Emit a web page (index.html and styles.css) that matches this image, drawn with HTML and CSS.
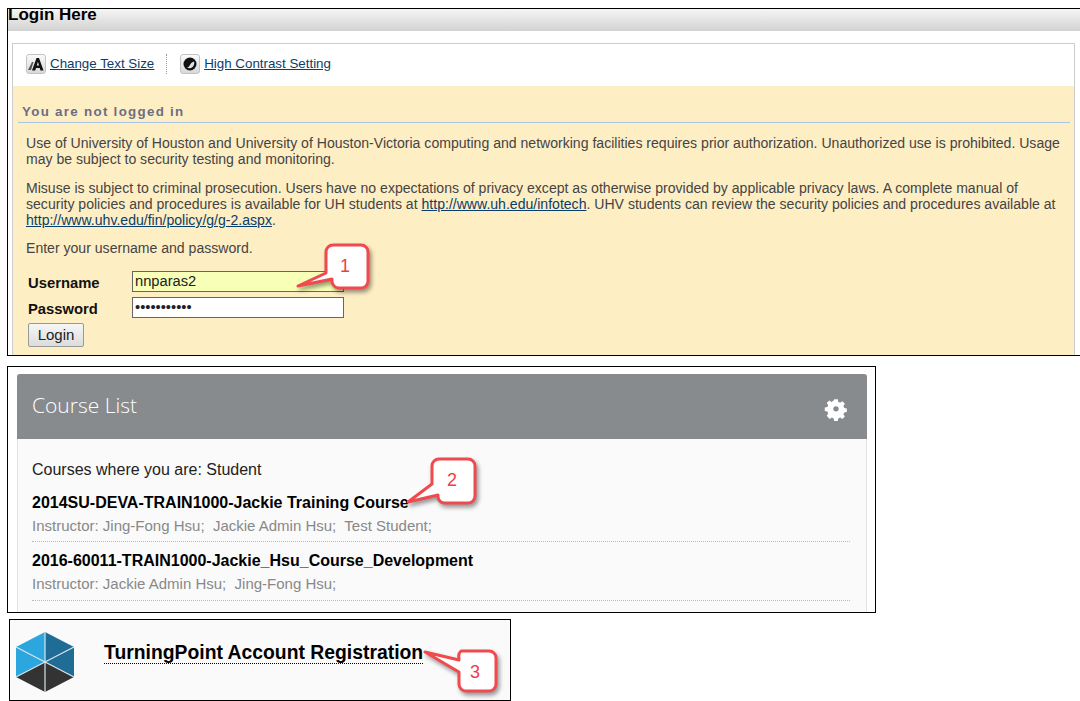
FILE: index.html
```html
<!DOCTYPE html>
<html lang="en">
<head>
<meta charset="utf-8">
<title>Login Here</title>
<link rel="stylesheet" href="styles.css">
</head>
<body>
<section class="shot login-shot">
  <h1 class="login-title">Login Here</h1>
  <div class="login-box">
    <div class="toolbar">
      <a class="tool" href="#">
        <span class="tool-icon">
          <svg width="18" height="18" viewBox="0 0 18 18"><path d="M1 15 5 7h1.500L4 15zM6 15l2-5h1.500L8 15z" fill="#555"/><path d="M5 15.500 9.500 3h2.500l4.500 12.500h-3l-.8-2.600H9l-.8 2.600zM9.800 10.500h2.200L10.900 6.800z" fill="#111"/></svg>
        </span>
        <span class="tool-label">Change Text Size</span>
      </a>
      <a class="tool tool-second" href="#">
        <span class="tool-icon">
          <svg width="18" height="18" viewBox="0 0 18 18"><circle cx="9" cy="9" r="6.500" fill="#111"/><path d="M13 6.500c.8 2.500-.5 5.500-3 6.500-1.500.6-3 .3-4-.5 1.800-.2 2.500-1.500 3.200-3C10 8 11.500 6.800 13 6.500z" fill="#e2e2e2"/></svg>
        </span>
        <span class="tool-label">High Contrast Setting</span>
      </a>
    </div>
    <div class="notice">
      <h2 class="notice-title">You are not logged in</h2>
      <p class="notice-text">Use of University of Houston and University of Houston-Victoria computing and networking facilities requires prior authorization. Unauthorized use is prohibited. Usage may be subject to security testing and monitoring.</p>
      <p class="notice-text">Misuse is subject to criminal prosecution. Users have no expectations of privacy except as otherwise provided by applicable privacy laws. A complete manual of security policies and procedures is available for UH students at <a href="#">http://www.uh.edu/infotech</a>. UHV students can review the security policies and procedures available at <a href="#">http://www.uhv.edu/fin/policy/g/g-2.aspx</a>.</p>
      <p class="notice-text notice-prompt">Enter your username and password.</p>
      <form class="login-form">
        <label class="field-label" for="u">Username</label>
        <input class="field field-filled" id="u" type="text" value="nnparas2">
        <label class="field-label" for="p">Password</label>
        <input class="field" id="p" type="password" value="12345678901">
        <button class="login-btn" type="button">Login</button>
      </form>
    </div>
  </div>
  <svg class="callout callout-1" width="80" height="52" viewBox="0 0 80 52">
    <path class="callout-shape" d="M38 2h28a7 7 0 0 1 7 7v29a7 7 0 0 1-7 7H44a7 7 0 0 1-7-7v-2L3 43l28-13V9a7 7 0 0 1 7-7z"/>
    <text class="callout-num" x="50" y="29">1</text>
  </svg>
</section>

<section class="shot course-shot">
  <div class="card">
    <header class="card-head">
      <h2 class="card-title">Course List</h2>
      <svg class="gear" width="24" height="24" viewBox="0 0 24 24"><path fill="#fff" fill-rule="evenodd" d="M10 1.500h4l.6 3a8 8 0 0 1 2 .9l2.600-1.700 2.800 2.800-1.700 2.600a8 8 0 0 1 .9 2l3 .6v4l-3 .6a8 8 0 0 1-.9 2l1.700 2.600-2.800 2.800-2.600-1.700a8 8 0 0 1-2 .9l-.6 3h-4l-.6-3a8 8 0 0 1-2-.9l-2.600 1.700L1.600 19.900l1.700-2.600a8 8 0 0 1-.9-2l-3-.6v-4l3-.6a8 8 0 0 1 .9-2L1.600 5.500l2.800-2.800L7 4.400a8 8 0 0 1 2-.9zM12 9.200a3 3 0 1 0 0 6 3 3 0 0 0 0-6z" transform="translate(1.300 1) scale(.89)"/></svg>
    </header>
    <div class="card-body">
      <p class="role">Courses where you are: Student</p>
      <div class="course">
        <h3 class="course-name">2014SU-DEVA-TRAIN1000-Jackie Training Course</h3>
        <p class="course-meta">Instructor: Jing-Fong Hsu;&nbsp; Jackie Admin Hsu;&nbsp; Test Student;</p>
      </div>
      <div class="course course-next">
        <h3 class="course-name">2016-60011-TRAIN1000-Jackie_Hsu_Course_Development</h3>
        <p class="course-meta">Instructor: Jackie Admin Hsu;&nbsp; Jing-Fong Hsu;</p>
      </div>
    </div>
  </div>
  <svg class="callout callout-2" width="76" height="54" viewBox="0 0 76 54">
    <path class="callout-shape" d="M33 2h29a7 7 0 0 1 7 7v30a7 7 0 0 1-7 7H38a7 7 0 0 1-6-6v-2L2 45l24-18V9a7 7 0 0 1 7-7z"/>
    <text class="callout-num" x="46" y="29">2</text>
  </svg>
</section>

<section class="shot turning-shot">
  <svg class="logo" width="60" height="60" viewBox="0 0 60 60">
    <path d="M30 0 59 15 30 30z" fill="#1f6d96"/>
    <path d="M59 15V45L30 30z" fill="#1f6d96"/>
    <path d="M30 0 1 15 30 30z" fill="#2ba6de"/>
    <path d="M1 15V45L30 30z" fill="#2ba6de"/>
    <path d="M1 45 30 30V60z" fill="#333"/>
    <path d="M59 45 30 30V60z" fill="#333"/>
    <path d="M30 0V60M1 15 59 45M59 15 1 45" stroke="#d8e4ea" stroke-width="1.200" fill="none"/>
  </svg>
  <h2 class="turning-title">TurningPoint Account Registration</h2>
  <svg class="callout callout-3" width="80" height="48" viewBox="0 0 80 48">
    <path class="callout-shape" d="M39 3h28a7 7 0 0 1 7 7v26a7 7 0 0 1-7 7H44a7 7 0 0 1-7-7V24L3 4l34 8v-2a7 7 0 0 1 2-7z"/>
    <text class="callout-num" x="53" y="30">3</text>
  </svg>
</section>
</body>
</html>
```
FILE: styles.css
```css
* { box-sizing: border-box; }
html, body { margin: 0; padding: 0; overflow: hidden; }
body {
  width: 1080px;
  height: 701px;
  padding-top: 8px;
  background: #fff;
  font-family: "Liberation Sans", Arial, sans-serif;
  color: #000;
}
h1, h2, h3, p { margin: 0; }

.shot { position: relative; border: 1px solid #000; }

/* Login */
.login-shot {
  width: 1090px;
  height: 348px;
  margin-left: 7px;
  background: #fff;
  overflow: hidden;
}
.login-title {
  height: 22px;
  font-size: 17px;
  line-height: 11px;
  font-weight: 700;
  background: linear-gradient(#f5f5f5, #d2d2d2);
}
.login-box {
  width: 1063px;
  margin: 12px 0 0 4px;
  border: 1px solid #ccc;
  border-bottom: 0;
  height: 320px;
}
.toolbar {
  display: flex;
  align-items: center;
  height: 42px;
  padding: 0 0 2px 13px;
  background: #fff;
}
.tool {
  display: flex;
  align-items: center;
  gap: 4px;
  font-size: 13.330px;
  color: #0b3d6b;
}
.tool-label { position: relative; top: -1px; text-decoration: underline; }
.tool-second {
  margin-left: 12px;
  padding-left: 13px;
  border-left: 1px dotted #999;
  height: 20px;
}
.tool-icon {
  display: flex;
  align-items: center;
  justify-content: center;
  width: 20px;
  height: 20px;
  border: 1px solid #c4c4c4;
  border-radius: 3px;
  background: linear-gradient(#fafafa, #d8d8d8);
}
.notice {
  height: 270px;
  padding: 18px 4px 0 5px;
  background: #feeec4;
}
.notice-title {
  padding: 0 0 2px 4px;
  border-bottom: 1px solid #a9c3e4;
  font-size: 13.330px;
  line-height: 16px;
  font-weight: 700;
  letter-spacing: 1.300px;
  color: #6a6e85;
}
.notice-text {
  margin: 13px 8px 0 8px;
  font-size: 14.070px;
  line-height: 16px;
  color: #444;
}
.notice-title + .notice-text { margin-top: 12px; }
.notice-prompt { margin-top: 12px; }
.login-form {
  display: grid;
  grid-template-columns: 104px 212px;
  grid-auto-rows: 26px;
  align-items: center;
  margin: 12px 0 0 10px;
}
.notice-text a { color: #0b3d6b; }
.field-label {
  padding-top: 3px;
  font-size: 14.800px;
  font-weight: 700;
  color: #111;
}
.field {
  width: 212px;
  height: 21px;
  padding: 0 2px;
  border: 1px solid #666;
  border-radius: 0;
  background: #fff;
  font: 14.700px "Liberation Sans", Arial, sans-serif;
  color: #222;
  outline: 0;
}
.field-filled { background: #f8ffb6; }
.login-btn {
  grid-column: 1;
  justify-self: start;
  width: 56px;
  height: 24px;
  margin-top: 3px;
  padding: 0;
  border: 1px solid #999;
  border-radius: 2px;
  background: linear-gradient(#f6f6f6, #dcdcdc);
  font: 15px "Liberation Sans", Arial, sans-serif;
  color: #222;
}

/* Callouts */
.callout { position: absolute; overflow: visible; }
.callout-shape {
  fill: #fff;
  stroke: #f04a4f;
  stroke-width: 3;
  stroke-linejoin: round;
  filter: drop-shadow(2px 3px 2px rgba(0, 0, 0, .4));
}
.callout-num {
  font: 18px "Liberation Sans", Arial, sans-serif;
  fill: #ee3d45;
  text-anchor: middle;
}
.callout-1 { left: 287px; top: 234px; }
.callout-2 { left: 398px; top: 90px; }
.callout-3 { left: 412px; top: 28px; }

/* Course list */
.course-shot {
  width: 869px;
  height: 247px;
  margin: 10px 0 0 7px;
  padding: 7px 0 0 9px;
  overflow: hidden;
}
.card {
  width: 850px;
  height: 250px;
  border-radius: 3px 3px 0 0;
  border: 1px solid #e4e4e4;
  border-top: 0;
  background: #fafafa;
}
.card-head {
  display: flex;
  align-items: center;
  justify-content: space-between;
  height: 65px;
  padding: 0 19px 0 15px;
  border-radius: 3px 3px 0 0;
  background: #888b8d;
  margin: 0 -1px;
}
.card-title {
  font: 300 21px/1 "Open Sans", sans-serif;
  color: #fff;
  padding-bottom: 3px;
}
.gear { margin-top: 5px; }
.card-body { padding: 22px 16px 0 14px; }
.role { font-size: 16px; line-height: 18px; color: #222; }
.course { padding: 15px 0 7px; border-bottom: 1px dotted #bbb; }
.course-next { padding: 10px 0 8px; }
.course-name { font-size: 16px; line-height: 18px; font-weight: 700; color: #000; }
.course-meta { margin-top: 6px; font-size: 15px; line-height: 16px; color: #888; }

/* TurningPoint */
.turning-shot {
  display: flex;
  align-items: flex-start;
  width: 502px;
  height: 82px;
  margin: 6px 0 0 9px;
  padding: 12px 0 0 5px;
  background: #fafafa;
}
.turning-title {
  margin: 10px 0 0 29px;
  font-size: 19.350px;
  line-height: 21px;
  font-weight: 700;
  border-bottom: 1px dotted #000;
}
```
